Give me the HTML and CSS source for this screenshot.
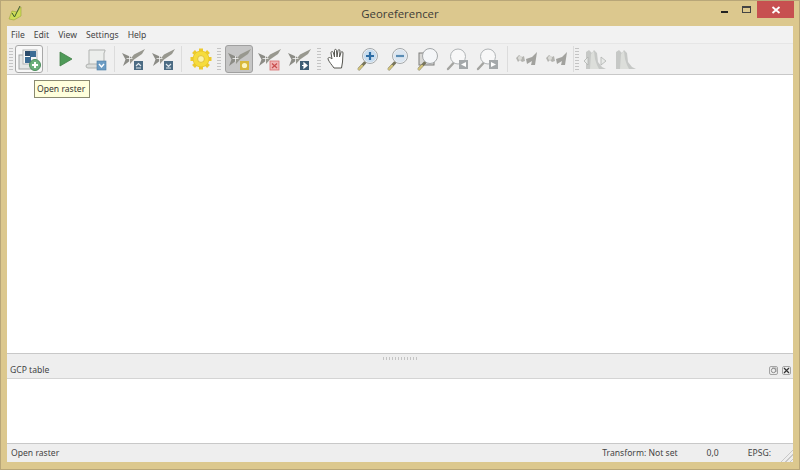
FILE: index.html
```html
<!DOCTYPE html>
<html lang="en">
<head>
    <meta charset="UTF-8">
    <title>Georeferencer</title>
    <link rel="stylesheet" href="styles.css">
</head>
<body>
    <svg class="defs" width="0" height="0">
        <symbol id="wings" viewBox="0 0 24 24">
            <path d="M1 6 L10 10 L10.500 12 L8 14.500 L2 19 L4.500 12.500 Z" fill="#8c8c86"/>
            <path d="M24 2 L21 7 L13 12.500 L9 17 L9 12.500 L13 7.500 Z" fill="#98988f"/>
            <path d="M8.500 9 V14.500 M5.500 11.500 H11.500" stroke="#f4f4f4" stroke-width="0.800" fill="none"/>
        </symbol>
        <symbol id="wings-small" viewBox="0 0 24 24">
            <path d="M1 11 L4 8 L7 10 L9 9 L10 14 L7 15 L5 13 L3 15 Z" fill="#b4b4b0"/>
            <path d="M22 5 L20 18 L16 18 L17 14 L12 17 L11 12 L17 10 Z" fill="#a2a29e"/>
            <circle cx="5" cy="11" r="2" fill="#dcdcd8"/>
        </symbol>
        <symbol id="lens" viewBox="0 0 24 24">
            <path d="M3 22 L9 15.500" stroke="#77745a" stroke-width="2.800" stroke-linecap="round"/>
            <path d="M3 22 L6 18.800" stroke="#d4c47c" stroke-width="2.200" stroke-linecap="round"/>
            <circle cx="14" cy="9" r="7.500" fill="#f4f6f8" stroke="#a4a8aa" stroke-width="1"/>
        </symbol>
        <symbol id="lens-pale" viewBox="0 0 24 24">
            <path d="M2 22 L7.500 16" stroke="#a4a4a0" stroke-width="2.400" stroke-linecap="round"/>
            <circle cx="12" cy="9.500" r="7.500" fill="#f8f8f8" stroke="#b0b4b6" stroke-width="1"/>
        </symbol>
        <symbol id="hist" viewBox="0 0 24 24">
            <path d="M3 22 L3 5 L6 3 L9 6 L11 3 L14 6 L15 15 L19 20 L23 22 Z" fill="#c6c8c6"/>
            <path d="M7 22 L8 7 L9 6 L11 4 L12 12 L14 18 L16 22 Z" fill="#dcdeda"/>
        </symbol>
    </svg>

    <div class="window">
        <header class="titlebar">
            <svg class="app-icon" width="18" height="18" viewBox="0 0 18 18">
                <path d="M2 15 L5 7 L10 8 L14 3 L14 12 L7 16 Z" fill="#cfdc58" stroke="#98a63a" stroke-width="0.600"/>
                <path d="M5 9 L7.500 13 L13 2" stroke="#3c5b2c" stroke-width="1" fill="none"/>
            </svg>
            <div class="title">Georeferencer</div>
            <div class="win-controls">
                <div class="win-btn"><span class="min-glyph"></span></div>
                <div class="win-btn"><span class="max-glyph"></span></div>
                <div class="win-close">
                    <svg width="10" height="10" viewBox="0 0 10 10"><path d="M1.500 2 L8.500 8 M8.500 2 L1.500 8" stroke="#fff" stroke-width="1.800"/></svg>
                </div>
            </div>
        </header>

        <div class="client">
            <nav class="menubar">
                <span>File</span>
                <span>Edit</span>
                <span>View</span>
                <span>Settings</span>
                <span>Help</span>
            </nav>

            <div class="toolbar">
                <span class="handle"></span>
                <button class="tool hover" title="Open raster">
                    <svg width="24" height="24" viewBox="0 0 24 24">
                        <rect x="2" y="8" width="13" height="14" fill="#e4e6e6" stroke="#a4a6a6"/>
                        <rect x="6" y="3" width="14" height="14" fill="#f8f8f8" stroke="#b4b6b6"/>
                        <rect x="8" y="4" width="5" height="5" fill="#2c4c6c"/>
                        <rect x="13" y="4" width="6" height="6" fill="#3c6c94"/>
                        <rect x="8" y="10" width="6" height="6" fill="#3c6c94"/>
                        <circle cx="18" cy="18" r="5.500" fill="#6cb07c" stroke="#4c8c5c"/>
                        <path d="M18 15 V21 M15 18 H21" stroke="#fff" stroke-width="2"/>
                    </svg>
                </button>
                <span class="sep"></span>
                <button class="tool">
                    <svg width="24" height="24" viewBox="0 0 24 24"><path d="M6 5 L18 12 L6 19 Z" fill="#4f9a58" stroke="#418048" stroke-width="0.800"/></svg>
                </button>
                <button class="tool">
                    <svg width="24" height="24" viewBox="0 0 24 24">
                        <path d="M5 3 H21 V4 L20 6 V18 H5 Z" fill="#eceeec" stroke="#b0b2b0"/>
                        <path d="M2 19 Q2 17 5 17 H14 V21 H4 Q2 21 2 19 Z" fill="#dcdedc" stroke="#b0b2b0"/>
                        <rect x="13" y="14" width="9" height="9" fill="#6c9cc4" stroke="#4c7ca4" stroke-width="0.600"/>
                        <path d="M15 17 L17.500 20 L20 17" stroke="#fff" stroke-width="1.400" fill="none"/>
                    </svg>
                </button>
                <span class="sep"></span>
                <button class="tool">
                    <svg width="24" height="24" viewBox="0 0 24 24">
                        <use href="#wings"/>
                        <rect x="13" y="14" width="9" height="9" fill="#4c6c84"/>
                        <path d="M15 19 L17.500 16.500 L20 19 M15 21 H20" stroke="#dfe8ee" stroke-width="1.200" fill="none"/>
                    </svg>
                </button>
                <button class="tool">
                    <svg width="24" height="24" viewBox="0 0 24 24">
                        <use href="#wings"/>
                        <rect x="13" y="14" width="9" height="9" fill="#4c6c84"/>
                        <path d="M15 17 L17.500 19.500 L20 17 M15 21 H20" stroke="#dfe8ee" stroke-width="1.200" fill="none"/>
                    </svg>
                </button>
                <span class="sep gear-sep"></span>
                <button class="tool">
                    <svg width="24" height="24" viewBox="0 0 24 24">
                        <path d="M12 1.500 V22.500 M1.500 12 H22.500 M4.500 4.500 L19.500 19.500 M19.500 4.500 L4.500 19.500" stroke="#ecc92e" stroke-width="4"/>
                        <circle cx="12" cy="12" r="8" fill="#f6dc3c" stroke="#e8c428" stroke-width="0.800"/>
                        <circle cx="12" cy="12" r="3.400" fill="#fbf2a8" stroke="#dcb828" stroke-width="0.800"/>
                    </svg>
                </button>
                <span class="handle gap-handle"></span>
                <button class="tool active">
                    <svg width="24" height="24" viewBox="0 0 24 24">
                        <use href="#wings"/>
                        <rect x="13" y="14" width="9" height="9" fill="#d8b83c"/>
                        <circle cx="17.500" cy="18.500" r="2.600" fill="#fbf4c0"/>
                    </svg>
                </button>
                <button class="tool">
                    <svg width="24" height="24" viewBox="0 0 24 24">
                        <use href="#wings"/>
                        <rect x="13" y="14" width="9" height="9" fill="#f0b4b4" stroke="#d86c6c" stroke-width="0.800"/>
                        <path d="M15 16.500 L20 21 M20 16.500 L15 21" stroke="#c84c4c" stroke-width="1.200"/>
                    </svg>
                </button>
                <button class="tool">
                    <svg width="24" height="24" viewBox="0 0 24 24">
                        <use href="#wings"/>
                        <rect x="13" y="14" width="9" height="9" fill="#3c5c74"/>
                        <path d="M15 18.500 H18 M17 16 L20 18.500 L17 21 Z" stroke="#fff" stroke-width="1.200" fill="#fff"/>
                    </svg>
                </button>
                <span class="handle wide-handle"></span>
                <button class="tool">
                    <svg width="24" height="24" viewBox="0 0 24 24">
                        <path d="M8 21 C6 18 3 15 2 12 C2 10 4 10 6 12 L5 6 C5 4 7 4 7.500 6 L8.500 10 L8.500 3.500 C8.500 2 10.500 2 10.500 3.500 L11 10 L12 3.500 C12.500 2 14 2.500 14 4 L13.500 10 L15 5.500 C15.500 4 17 4.500 17 6 L16.500 15 L15.500 21 Z" fill="#fff" stroke="#55554f" stroke-width="1" stroke-linejoin="round"/>
                    </svg>
                </button>
                <button class="tool">
                    <svg width="24" height="24" viewBox="0 0 24 24">
                        <use href="#lens"/>
                        <circle cx="14" cy="9" r="6.500" fill="#c8dcee"/>
                        <path d="M14 5 V13 M10 9 H18" stroke="#2c6ca4" stroke-width="2.200"/>
                    </svg>
                </button>
                <button class="tool">
                    <svg width="24" height="24" viewBox="0 0 24 24">
                        <use href="#lens"/>
                        <circle cx="14" cy="9" r="6.500" fill="#dce6f0"/>
                        <path d="M10 9 H18" stroke="#5a8cb4" stroke-width="2.200"/>
                    </svg>
                </button>
                <button class="tool">
                    <svg width="24" height="24" viewBox="0 0 24 24">
                        <rect x="3" y="6" width="15" height="12" fill="#d8d8d6" stroke="#7c7c7a"/>
                        <use href="#lens"/>
                    </svg>
                </button>
                <button class="tool">
                    <svg width="24" height="24" viewBox="0 0 24 24">
                        <use href="#lens-pale"/>
                        <rect x="13" y="13" width="9" height="9" fill="#a4a8aa"/>
                        <path d="M20 15 L15 17.500 L20 20 Z" fill="#fff"/>
                    </svg>
                </button>
                <button class="tool">
                    <svg width="24" height="24" viewBox="0 0 24 24">
                        <use href="#lens-pale"/>
                        <rect x="13" y="13" width="9" height="9" fill="#a4a8aa"/>
                        <path d="M15 15 L20 17.500 L15 20 Z" fill="#fff"/>
                    </svg>
                </button>
                <span class="sep wide-sep"></span>
                <button class="tool"><svg width="24" height="24" viewBox="0 0 24 24"><use href="#wings-small"/></svg></button>
                <button class="tool"><svg width="24" height="24" viewBox="0 0 24 24"><use href="#wings-small"/></svg></button>
                <span class="sep last-sep"></span>
                <span class="handle"></span>
                <button class="tool">
                    <svg width="24" height="24" viewBox="0 0 24 24">
                        <use href="#hist"/>
                        <path d="M1 14 L5 10 V18 Z M23 14 L18 10 V18 Z" fill="#e8eae8" stroke="#b0b2b0" stroke-width="0.800"/>
                    </svg>
                </button>
                <button class="tool"><svg width="24" height="24" viewBox="0 0 24 24"><use href="#hist"/></svg></button>
            </div>

            <main class="canvas"></main>

            <div class="splitter"><span class="grip"></span></div>

            <section class="dock">
                <div class="dock-title">
                    <span>GCP table</span>
                    <div class="dock-buttons">
                        <span class="dock-btn">
                            <svg width="7" height="7" viewBox="0 0 7 7"><circle cx="3.500" cy="3.500" r="2.200" fill="none" stroke="#777" stroke-width="0.800"/><path d="M2 1 H6 V5" fill="none" stroke="#888" stroke-width="0.700"/></svg>
                        </span>
                        <span class="dock-btn">
                            <svg width="7" height="7" viewBox="0 0 7 7"><path d="M1 1 L6 6 M6 1 L1 6" stroke="#333" stroke-width="1.200"/></svg>
                        </span>
                    </div>
                </div>
                <div class="gcp-table"></div>
            </section>

            <footer class="statusbar">
                <span class="status-msg">Open raster</span>
                <span class="status-transform">Transform: Not set</span>
                <span class="status-coord">0,0</span>
                <span class="status-epsg">EPSG:</span>
                <span class="size-grip"></span>
            </footer>
        </div>
    </div>

    <div class="tooltip">Open raster</div>
</body>
</html>
```

FILE: styles.css
```css
html, body {
    margin: 0;
    padding: 0;
}
body {
    width: 800px;
    height: 470px;
    overflow: hidden;
    position: relative;
    font-family: "Noto Sans", sans-serif;
    font-size: 8.600px;
    color: #444;
}
.defs {
    position: absolute;
}
.window {
    height: 470px;
    box-sizing: border-box;
    background: #dcc88e;
    border: 1px solid #b8a678;
    padding: 0 6px 7px;
    display: flex;
    flex-direction: column;
}
.titlebar {
    height: 25px;
    flex: none;
    position: relative;
    display: flex;
    justify-content: center;
    align-items: center;
}
.app-icon {
    position: absolute;
    left: 0;
    top: 3px;
}
.title {
    font-family: "Open Sans", sans-serif;
    font-size: 11.400px;
    color: #3c3c38;
}
.win-controls {
    position: absolute;
    right: -1px;
    top: 0;
    display: flex;
    align-items: flex-start;
}
.win-btn {
    width: 22px;
    height: 17px;
    display: flex;
    align-items: center;
    justify-content: center;
}
.min-glyph {
    width: 7px;
    height: 2px;
    background: #222;
    margin-top: 5px;
}
.max-glyph {
    width: 7px;
    height: 4px;
    border: 1px solid #444;
    border-top-width: 2px;
}
.win-close {
    width: 37px;
    height: 17px;
    background: #c75050;
    display: flex;
    align-items: center;
    justify-content: center;
}
.client {
    flex: 1;
    display: flex;
    flex-direction: column;
    background: #eeeeee;
    min-height: 0;
}
.menubar {
    height: 17px;
    flex: none;
    display: flex;
    align-items: center;
    gap: 9px;
    padding-left: 4px;
    background: #f2f2f2;
    color: #444;
}
.toolbar {
    height: 32px;
    flex: none;
    display: flex;
    align-items: center;
    padding-left: 1px;
    background: #f0f0f0;
    border-top: 1px solid #e6e6e6;
    border-bottom: 1px solid #c8c8c8;
    box-sizing: border-box;
}
.handle {
    width: 4px;
    height: 22px;
    margin: 0 1px;
    background: repeating-linear-gradient(to bottom, #c4c4c4 0, #c4c4c4 1px, transparent 1px, transparent 3px);
}
.gap-handle {
    margin: 0 3px 0 1px;
}
.wide-handle {
    margin: 0 2px 0 3px;
}
.sep {
    width: 1px;
    height: 26px;
    background: #dcdcdc;
    margin: 0 3px;
}
.gear-sep {
    margin: 0 4px 0 3px;
}
.wide-sep {
    margin: 0 4px;
}
.last-sep {
    margin: 0 0 0 1px;
}
.tool {
    width: 30px;
    height: 28px;
    padding: 0;
    flex: none;
    border: 1px solid transparent;
    border-radius: 3px;
    background: none;
    display: flex;
    align-items: center;
    justify-content: center;
    box-sizing: border-box;
}
.hover {
    width: 28px;
    margin: 0 1px;
    background: #f8f8f8;
    border-color: #a8a8a8;
}
.active {
    width: 28px;
    margin: 0 1px;
    background: #c6c6c6;
    border-color: #a0a0a0;
}
.canvas {
    flex: 1;
    background: #fff;
    border-bottom: 1px solid #c8c8c8;
    min-height: 0;
}
.splitter {
    height: 8px;
    flex: none;
    display: flex;
    justify-content: center;
    align-items: center;
}
.grip {
    width: 34px;
    height: 3px;
    background: repeating-linear-gradient(to right, #c4c4c4 0, #c4c4c4 1px, transparent 1px, transparent 3px);
}
.dock {
    flex: none;
    display: flex;
    flex-direction: column;
}
.dock-title {
    height: 16px;
    display: flex;
    align-items: center;
    justify-content: space-between;
    padding: 0 2px 0 3px;
    border-bottom: 1px solid #d4d4d4;
    color: #444;
}
.dock-buttons {
    display: flex;
    gap: 4px;
}
.dock-btn {
    width: 7px;
    height: 7px;
    border: 1px solid #a4a4a4;
    border-radius: 2px;
    display: flex;
}
.gcp-table {
    height: 64px;
    background: #fff;
    border-bottom: 1px solid #c8c8c8;
}
.statusbar {
    height: 18px;
    flex: none;
    display: flex;
    align-items: center;
    position: relative;
    padding-left: 4px;
    color: #444;
}
.status-msg {
    flex: 1;
}
.status-coord {
    margin-left: 29px;
}
.status-epsg {
    margin-left: 29px;
    margin-right: 22px;
}
.size-grip {
    position: absolute;
    right: 0;
    bottom: 0;
    width: 14px;
    height: 14px;
    background: repeating-linear-gradient(135deg, transparent 0, transparent 2px, #c8c8c8 2px, #c8c8c8 3px);
    clip-path: polygon(100% 0, 100% 100%, 0 100%);
}
.tooltip {
    position: absolute;
    left: 34px;
    top: 80px;
    height: 18px;
    width: 56px;
    padding-left: 2px;
    box-sizing: border-box;
    line-height: 16px;
    background: #ffffdc;
    border: 1px solid #8a8a70;
    color: #333;
}
```
